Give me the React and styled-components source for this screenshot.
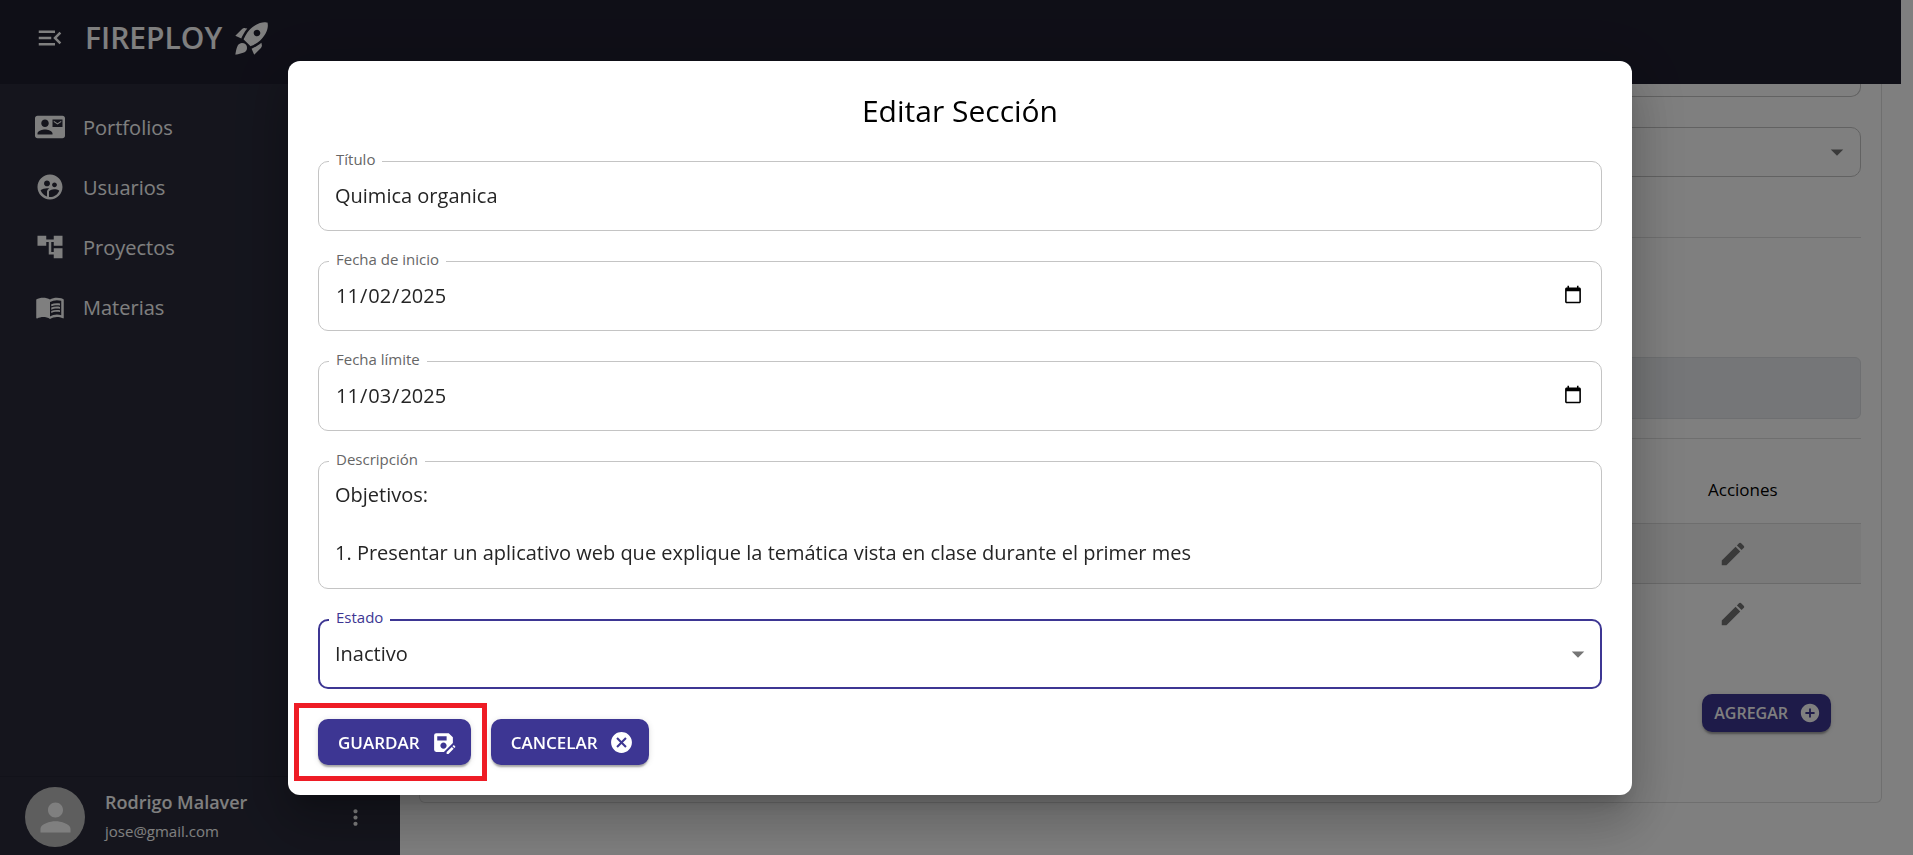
import React from "react";
import styled, { createGlobalStyle } from "styled-components";
import {
  MdMenuOpen,
  MdRocketLaunch,
  MdContactMail,
  MdSupervisedUserCircle,
  MdAccountTree,
  MdMenuBook,
  MdMoreVert,
  MdPerson,
  MdEdit,
  MdAddCircle,
  MdCancel,
  MdArrowDropDown,
  MdSaveAs,
} from "react-icons/md";

const GlobalStyle = createGlobalStyle`
  *, *::before, *::after { box-sizing: border-box; }
  body {
    margin: 0;
    overflow: hidden;
    background: #fff;
    color: #252525;
    font-family: "Open Sans", "Noto Sans", sans-serif;
    font-size: 20px;
  }
  button, input, select, textarea { font: inherit; color: inherit; }
  svg { display: block; flex: none; }
`;

const Page = styled.div`
  height: 100vh;
  display: flex;
  flex-direction: column;
`;

const Header = styled.header`
  flex: none;
  display: flex;
  align-items: center;
  gap: 20px;
  height: 84px;
  margin-right: 12px;
  padding: 0 35px 8px;
  background: #1f1e2f;
  color: #fff;
`;

const IconButton = styled.button`
  display: flex;
  padding: ${(p) => p.$pad || 0}px;
  border: 0;
  background: none;
  color: ${(p) => p.$color || "inherit"};
  cursor: pointer;
`;

const Brand = styled.a`
  display: flex;
  align-items: center;
  gap: 10px;
  color: inherit;
  font-size: 30px;
  font-weight: 600;
  line-height: 40px;
  text-decoration: none;
`;

const Body = styled.div`
  flex: 1;
  min-height: 0;
  display: flex;
`;

const Sidebar = styled.aside`
  flex: none;
  width: 400px;
  display: flex;
  flex-direction: column;
  justify-content: space-between;
  background: #2a2b3b;
  color: #fff;
`;

const NavList = styled.nav`
  display: flex;
  flex-direction: column;
  padding-top: 13px;
`;

const NavLink = styled.a`
  display: flex;
  align-items: center;
  gap: 18px;
  height: 60px;
  padding: 0 35px;
  color: inherit;
  font-weight: 500;
  text-decoration: none;
`;

const UserBar = styled.div`
  display: flex;
  align-items: center;
  gap: 20px;
  height: 79px;
  padding: 2px 32px 0 25px;
  border-top: 1px solid #242534;
`;

const Avatar = styled.div`
  display: flex;
  align-items: center;
  justify-content: center;
  width: 60px;
  height: 60px;
  border-radius: 50%;
  background: #bdbdbd;
`;

const UserText = styled.div`
  flex: 1;
  display: flex;
  flex-direction: column;
  gap: 4px;
  line-height: 25px;
`;

const UserName = styled.strong`
  font-size: 18px;
  font-weight: 600;
`;

const UserMail = styled.span`
  font-size: 15px;
`;

const Main = styled.main`
  flex: 1;
  min-width: 0;
  padding: 0 31px 0 19px;
`;

const Card = styled.section`
  padding: 0 20px 70px;
  border: 1px solid #dfdfdf;
  border-top: 0;
  border-radius: 0 0 6px 6px;
`;

const FieldEnd = styled.div`
  height: 13px;
  border: 1px solid #c4c4c4;
  border-top: 0;
  border-radius: 0 0 10px 10px;
`;

const PageSelect = styled.div`
  position: relative;
  margin: 30px 0 60px;
  color: #757575;
`;

const Line = styled.hr`
  height: 1px;
  margin: 0;
  border: 0;
  background: #dfdfdf;
`;

const Notice = styled.div`
  height: 62px;
  margin: 119px 0 19px;
  border: 1px solid #dcdfe2;
  border-radius: 6px;
  background: #ebedf0;
`;

const Table = styled.table`
  width: 100%;
  border-collapse: collapse;
  table-layout: fixed;

  th, td {
    height: 60px;
    padding: 2px 20px 0;
    text-align: left;
  }
  th {
    height: 84px;
    padding-top: 18px;
    font-size: 17px;
    font-weight: 400;
    color: #000;
  }
  tbody tr:first-child {
    background: #f5f5f5;
    border-top: 1px solid #dcdcdc;
    border-bottom: 1px solid #d4d4d4;
  }
  th:last-child { width: 173px; }
`;

const CardActions = styled.div`
  display: flex;
  justify-content: flex-end;
  padding: 51px 30px 0 0;
`;

const Button = styled.button`
  display: flex;
  align-items: center;
  gap: 11px;
  height: ${(p) => (p.$small ? 38 : 46)}px;
  padding: ${(p) => (p.$small ? "0 10px 0 12px" : "0 15px 0 20px")};
  border: 0;
  border-radius: 10px;
  background: #3d3693;
  color: #fff;
  font-size: ${(p) => (p.$small ? 16 : 17)}px;
  font-weight: 600;
  box-shadow: 0 4px 2px -2px rgba(0, 0, 0, 0.2), 0 2px 2px rgba(0, 0, 0, 0.14),
    0 1px 6px rgba(0, 0, 0, 0.12);
  cursor: pointer;
`;

const Backdrop = styled.div`
  position: fixed;
  inset: 0;
  display: flex;
  align-items: center;
  justify-content: center;
  padding-top: 1px;
  padding-left: 7px;
  background: rgba(0, 0, 0, 0.5);
`;

const Dialog = styled.form`
  display: flex;
  flex-direction: column;
  gap: 30px;
  width: 90%;
  max-width: 1344px;
  padding: 30px;
  border-radius: 12px;
  background: #fff;
  box-shadow: 0 14px 19px -9px rgba(0, 0, 0, 0.2),
    0 30px 48px 4px rgba(0, 0, 0, 0.14), 0 11px 58px 10px rgba(0, 0, 0, 0.12);
`;

const Title = styled.h2`
  margin: 0;
  color: #000;
  font-size: 30px;
  font-weight: 400;
  line-height: 40px;
  text-align: center;
`;

const Field = styled.div`
  position: relative;
`;

const Label = styled.label`
  position: absolute;
  top: -12px;
  left: 11px;
  padding: 0 7px;
  background: #fff;
  color: ${(p) => (p.$active ? "#3d3693" : "#666")};
  font-size: 15px;
  line-height: 20px;
`;

const Control = styled.input`
  display: block;
  width: 100%;
  height: ${(p) => p.$height || 70}px;
  margin: 0;
  padding: 0 16px 2px;
  border: ${(p) => (p.$active ? "2px solid #3d3693" : "1px solid #c4c4c4")};
  border-radius: 10px;
  outline: 0;
  background: none;
  line-height: 29px;
  appearance: none;
  resize: none;
  overflow: hidden;
`;

const TextArea = styled(Control)`
  padding: 18px 16px;
`;

const Select = styled(Control)`
  padding: 0 15px 2px;
`;

const SelectArrow = styled(MdArrowDropDown)`
  position: absolute;
  top: 50%;
  right: 9px;
  width: 30px;
  height: 30px;
  margin-top: -15px;
  color: #757575;
  pointer-events: none;
`;

const Actions = styled.div`
  display: flex;
  gap: 20px;
`;

const Highlighted = styled.div`
  position: relative;

  &::after {
    content: "";
    position: absolute;
    inset: -16px -16px -16px -24px;
    border: 5px solid #ee1c25;
    pointer-events: none;
  }
`;

const navItems = [
  { label: "Portfolios", Icon: MdContactMail },
  { label: "Usuarios", Icon: MdSupervisedUserCircle },
  { label: "Proyectos", Icon: MdAccountTree },
  { label: "Materias", Icon: MdMenuBook },
];

const description =
  "Objetivos:\n\n1. Presentar un aplicativo web que explique la temática vista en clase durante el primer mes";

export default function App() {
  return (
    <>
      <GlobalStyle />
      <Page>
        <Header>
          <IconButton type="button" aria-label="Menú">
            <MdMenuOpen size={30} />
          </IconButton>
          <Brand href="#">
            FIREPLOY <MdRocketLaunch size={40} />
          </Brand>
        </Header>
        <Body>
          <Sidebar>
            <NavList>
              {navItems.map(({ label, Icon }) => (
                <NavLink href="#" key={label}>
                  <Icon size={30} />
                  {label}
                </NavLink>
              ))}
            </NavList>
            <UserBar>
              <Avatar>
                <MdPerson size={45} />
              </Avatar>
              <UserText>
                <UserName>Rodrigo Malaver</UserName>
                <UserMail>jose@gmail.com</UserMail>
              </UserText>
              <IconButton type="button" aria-label="Opciones">
                <MdMoreVert size={25} />
              </IconButton>
            </UserBar>
          </Sidebar>
          <Main>
            <Card>
              <FieldEnd />
              <PageSelect>
                <Control as="select" $height={50} aria-label="Filtro" />
                <SelectArrow />
              </PageSelect>
              <Line />
              <Notice />
              <Line />
              <Table>
                <thead>
                  <tr>
                    <td />
                    <th scope="col">Acciones</th>
                  </tr>
                </thead>
                <tbody>
                  {[1, 2].map((row) => (
                    <tr key={row}>
                      <td />
                      <td>
                        <IconButton type="button" aria-label="Editar" $pad={10} $color="#757575">
                          <MdEdit size={30} />
                        </IconButton>
                      </td>
                    </tr>
                  ))}
                </tbody>
              </Table>
              <CardActions>
                <Button type="button" $small>
                  AGREGAR <MdAddCircle size={22} />
                </Button>
              </CardActions>
            </Card>
          </Main>
        </Body>
      </Page>
      <Backdrop>
        <Dialog role="dialog" aria-labelledby="dialog-title">
          <Title id="dialog-title">Editar Sección</Title>
          <Field>
            <Control id="titulo" type="text" defaultValue="Quimica organica" />
            <Label htmlFor="titulo">Título</Label>
          </Field>
          <Field>
            <Control id="inicio" type="date" defaultValue="2025-11-02" />
            <Label htmlFor="inicio">Fecha de inicio</Label>
          </Field>
          <Field>
            <Control id="limite" type="date" defaultValue="2025-11-03" />
            <Label htmlFor="limite">Fecha límite</Label>
          </Field>
          <Field>
            <TextArea as="textarea" id="descripcion" $height={128} defaultValue={description} />
            <Label htmlFor="descripcion">Descripción</Label>
          </Field>
          <Field>
            <Select as="select" id="estado" $active defaultValue="Inactivo">
              <option>Activo</option>
              <option>Inactivo</option>
            </Select>
            <Label htmlFor="estado" $active>
              Estado
            </Label>
            <SelectArrow />
          </Field>
          <Actions>
            <Highlighted>
              <Button type="button">
                GUARDAR <MdSaveAs size={25} />
              </Button>
            </Highlighted>
            <Button type="button">
              CANCELAR <MdCancel size={25} />
            </Button>
          </Actions>
        </Dialog>
      </Backdrop>
    </>
  );
}
